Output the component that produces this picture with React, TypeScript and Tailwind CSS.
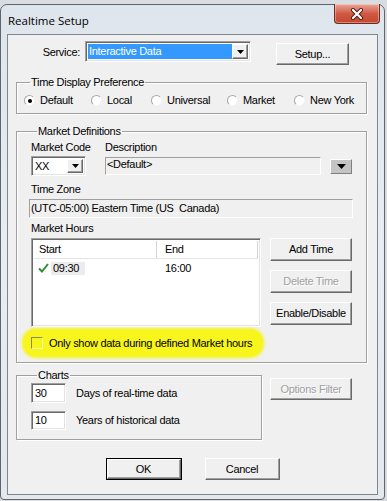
const ui = "font-['Liberation_Sans',Arial,sans-serif] text-[11px] leading-[13px] tracking-[-0.3px] text-black"

const raised =
  "border border-t-white border-l-white border-r-[#696969] border-b-[#696969] bg-[#f0f0f0] shadow-[inset_-1px_-1px_0_#a0a0a0]"
const sunken =
  "border border-t-[#a0a0a0] border-l-[#a0a0a0] border-r-white border-b-white shadow-[inset_1px_1px_0_#696969,inset_-1px_-1px_0_#e3e3e3]"
const flatField = "border border-t-[#a0a0a0] border-l-[#a0a0a0] border-r-white border-b-white"

function Arrow() {
  return (
    <svg width="7" height="4" viewBox="0 0 7 4">
      <path d="M0 0h7L3.5 4z" fill="#000" />
    </svg>
  )
}

function Btn({
  label,
  w = "w-[82px]",
  h = "h-[23px]",
  disabled = false,
}: {
  label: string
  w?: string
  h?: string
  disabled?: boolean
}) {
  return (
    <div
      className={`${raised} ${w} ${h} flex items-center justify-center ${
        disabled ? "text-[#a0a0a0] [text-shadow:1px_1px_0_#fff]" : ""
      }`}
    >
      {label}
    </div>
  )
}

function Radio({ label, checked = false }: { label: string; checked?: boolean }) {
  return (
    <div className="flex items-center gap-[5px]">
      <div className="w-[11px] h-[11px] rounded-full border border-t-[#a8a8a8] border-l-[#a8a8a8] border-r-[#f4f4f4] border-b-[#f4f4f4] bg-white flex items-center justify-center">
        {checked && <div className="w-[4px] h-[4px] rounded-full bg-black" />}
      </div>
      <span>{label}</span>
    </div>
  )
}

function Group({
  label,
  className,
  children,
}: {
  label: string
  className: string
  children: React.ReactNode
}) {
  return (
    <fieldset
      className={`border border-[#a0a0a0] shadow-[1px_1px_0_#fff,inset_1px_1px_0_#fff] ${className}`}
    >
      <legend className="ml-[6px] px-[1px] leading-[13px]">{label}</legend>
      {children}
    </fieldset>
  )
}

export default function App() {
  return (
    <div className={`${ui} w-[387px] h-[501px] bg-[#d9dde2] overflow-hidden pt-[4px]`}>
      {/* window frame */}
      <div className="w-[385px] h-[496px] rounded-t-[7px] rounded-b-[4px] border border-[#5b6670] bg-gradient-to-b from-[#dfe5ec] via-[#e9edf1] to-[#e4e8ec] px-[6px] flex flex-col">
        {/* title bar */}
        <div className="h-[29px] flex items-start justify-between shrink-0">
          <span className="font-['Open_Sans',sans-serif] text-[11.5px] tracking-normal leading-[16px] mt-[8px] ml-[1px]">
            Realtime Setup
          </span>
          <div className="w-[46px] h-[20px] -mt-px mr-[-2px] rounded-b-[4px] border border-[#6d2a1e] border-t-0 bg-gradient-to-b from-[#e9a598] via-[#cf5a44] to-[#c4472f] flex items-center justify-center shadow-[inset_0_0_0_1px_rgba(255,255,255,0.35)]">
            <svg width="14" height="12" viewBox="0 0 14 12">
              <path d="M3 2l8 8M11 2l-8 8" stroke="#4a1a12" strokeWidth="4" strokeLinecap="round" />
              <path d="M3 2l8 8M11 2l-8 8" stroke="#fff" strokeWidth="2.2" strokeLinecap="round" />
            </svg>
          </div>
        </div>

        {/* client area */}
        <div className="w-[371px] h-[461px] border border-[#7d8793] bg-[#f0f0f0] flex flex-col pl-[8px]">
          {/* service row */}
          <div className="flex items-start mt-[6px]">
            <div className="w-[69px] h-[21px] pt-[5px] text-right pr-[5px]">Service:</div>
            <div className={`${sunken} bg-white w-[166px] h-[21px] flex items-center p-[2px]`}>
              <div className="flex-1 h-full bg-[#3399ff] text-white pl-[1px] flex items-center">
                Interactive Data
              </div>
              <div className={`${raised} w-[16px] h-full flex items-center justify-center`}>
                <Arrow />
              </div>
            </div>
            <div className="ml-[25px] mt-[2px]">
              <Btn label="Setup..." w="w-[73px]" h="h-[22px]" />
            </div>
          </div>

          {/* time display preference */}
          <Group label="Time Display Preference" className="mt-[11px] w-[351px] h-[38px] pl-[7px]">
            <div className="flex items-center mt-[5px] whitespace-nowrap">
              <div className="w-[67px]">
                <Radio label="Default" checked />
              </div>
              <div className="w-[60px]">
                <Radio label="Local" />
              </div>
              <div className="w-[76px]">
                <Radio label="Universal" />
              </div>
              <div className="w-[67px]">
                <Radio label="Market" />
              </div>
              <Radio label="New York" />
            </div>
          </Group>

          {/* market definitions */}
          <Group label="Market Definitions" className="mt-[11px] w-[351px] h-[238px] pl-[14px]">
            <div className="flex mt-[3px]">
              <div className="w-[74px] flex flex-col gap-[2px]">
                <span>Market Code</span>
                <div className={`${sunken} bg-white w-[55px] h-[20px] flex items-center p-[2px]`}>
                  <span className="flex-1 pl-[1px]">XX</span>
                  <div className={`${raised} w-[16px] h-full flex items-center justify-center`}>
                    <Arrow />
                  </div>
                </div>
              </div>
              <div className="flex flex-col gap-[2px]">
                <span>Description</span>
                <div className="flex items-center">
                  <div className={`${flatField} w-[216px] h-[18px] pl-[1px] mt-[1px]`}>&lt;Default&gt;</div>
                  <div className="ml-[9px] mt-[2px] w-[22px] h-[15px] bg-[#c4c4c4] border border-t-white border-l-white border-r-[#808080] border-b-[#808080] flex items-center justify-center">
                    <svg width="9" height="5" viewBox="0 0 9 5">
                      <path d="M0 0h9L4.5 5z" fill="#000" />
                    </svg>
                  </div>
                </div>
              </div>
            </div>

            <div className="mt-[7px]">Time Zone</div>
            <div className={`${flatField} -ml-[2px] mt-[3px] w-[324px] h-[19px] pl-[1px] flex items-center`}>
              (UTC-05:00) Eastern Time (US&nbsp;&nbsp;Canada)
            </div>

            <div className="mt-[4px]">Market Hours</div>
            <div className="flex mt-[3px]">
              <div className={`${sunken} bg-white w-[230px] h-[89px] p-[2px]`}>
                <div className="flex h-[18px] border-b border-[#e5e5e5]">
                  <div className="w-[123px] border-r border-[#d5d5d5] pl-[5px] flex items-center">Start</div>
                  <div className="w-[101px] border-r border-[#d5d5d5] pl-[8px] flex items-center">End</div>
                </div>
                <div className="flex h-[18px] items-center">
                  <div className="w-[123px] flex items-center pl-[4px]">
                    <svg width="11" height="10" viewBox="0 0 11 10">
                      <path d="M1 5.5l3 3L10 1" stroke="#2f8f2f" strokeWidth="2" fill="none" />
                    </svg>
                    <span className="ml-[2px] bg-[#ececec] px-[2px] pr-[6px]">09:30</span>
                  </div>
                  <div className="pl-[8px]">16:00</div>
                </div>
              </div>
              <div className="ml-[9px] flex flex-col gap-[9px]">
                <Btn label="Add Time" />
                <Btn label="Delete Time" disabled />
                <Btn label="Enable/Disable" />
              </div>
            </div>

            {/* highlighted checkbox */}
            <div className="-ml-[7px] mt-[3px] w-[238px] h-[26px] rounded-[12px] bg-[#f7f51c] shadow-[0_0_3px_2px_#f7f51c] flex items-center pl-[7px] whitespace-nowrap">
              <div className="w-[12px] h-[12px] shrink-0 border border-t-[#8c8c5a] border-l-[#8c8c5a] border-r-[#fbfba0] border-b-[#fbfba0]" />
              <span className="ml-[6px]">Only show data during defined Market hours</span>
            </div>
          </Group>

          {/* charts row */}
          <div className="flex items-start mt-[6px]">
            <Group label="Charts" className="w-[246px] h-[71px] pl-[14px]">
              <div className="flex flex-col gap-[8px] mt-[1px]">
                <div className="flex items-center">
                  <div className={`${sunken} bg-white w-[35px] h-[20px] pl-[3px] flex items-center`}>30</div>
                  <span className="ml-[10px]">Days of real-time data</span>
                </div>
                <div className="flex items-center">
                  <div className={`${sunken} bg-white w-[35px] h-[19px] pl-[3px] flex items-center`}>10</div>
                  <span className="ml-[10px]">Years of historical data</span>
                </div>
              </div>
            </Group>
            <div className="ml-[8px] mt-[9px]">
              <Btn label="Options Filter" h="h-[22px]" disabled />
            </div>
          </div>

          {/* ok / cancel */}
          <div className="flex justify-center gap-[23px] mt-[18px] pr-[8px]">
            <div className="border border-black">
              <Btn label="OK" w="w-[74px]" h="h-[20px]" />
            </div>
            <Btn label="Cancel" w="w-[75px]" h="h-[22px]" />
          </div>
        </div>
      </div>
    </div>
  )
}
